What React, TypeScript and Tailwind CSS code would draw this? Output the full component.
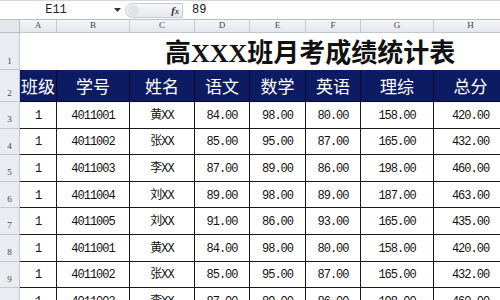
const rows: string[][] = [
  ['1', '4011001', '黄XX', '84.00', '98.00', '80.00', '158.00', '420.00'],
  ['1', '4011002', '张XX', '85.00', '95.00', '87.00', '165.00', '432.00'],
  ['1', '4011003', '李XX', '87.00', '89.00', '86.00', '198.00', '460.00'],
  ['1', '4011004', '刘XX', '89.00', '98.00', '89.00', '187.00', '463.00'],
  ['1', '4011005', '刘XX', '91.00', '86.00', '93.00', '165.00', '435.00'],
  ['1', '4011001', '黄XX', '84.00', '98.00', '80.00', '158.00', '420.00'],
  ['1', '4011002', '张XX', '85.00', '95.00', '87.00', '165.00', '432.00'],
  ['1', '4011003', '李XX', '87.00', '89.00', '86.00', '198.00', '460.00'],
];

const cols = ['A', 'B', 'C', 'D', 'E', 'F', 'G', 'H'];
const heads = ['班级', '学号', '姓名', '语文', '数学', '英语', '理综', '总分'];

const mono = { fontFamily: '"Liberation Mono", "Noto Sans CJK SC", monospace' };

function RowNum({ n, h }: { n: number; h: string }) {
  return (
    <div
      className={`${h} flex items-end justify-center bg-[#e9ecf0] border-b border-r border-[#c3c8cf] text-[9px] text-[#444] pb-[1px]`}
      style={{ fontFamily: '"Liberation Serif", serif' }}
    >
      {n}
    </div>
  );
}

export default function App() {
  return (
    <div className="w-[500px] h-[300px] overflow-hidden bg-white">
      {/* formula bar */}
      <div className="h-[20px] flex items-center border-b border-[#b9bec6] border-t border-t-[#d5d8dc] bg-white">
        <div className="w-[112px] text-center text-[12px] text-[#222]" style={mono}>
          E11
        </div>
        <div className="w-[10px] flex justify-center">
          <svg width="7" height="4" viewBox="0 0 7 4">
            <path d="M0 0h7L3.5 4z" fill="#333" />
          </svg>
        </div>
        <div className="ml-[3px] h-[15px] w-[58px] rounded-l-full border border-[#c6cad0] bg-gradient-to-b from-[#f6f7f9] to-[#e6e9ee] flex items-center justify-end pr-[3px] relative">
          <div className="absolute left-[2px] top-[1px] w-[11px] h-[11px] rounded-full bg-[#dfe3e8]" />
          <span className="text-[11px] italic font-bold text-[#333]" style={{ fontFamily: '"Liberation Serif", serif' }}>
            f<span className="text-[8px]">x</span>
          </span>
        </div>
        <div className="pl-[9px] text-[12px] text-[#111]" style={mono}>
          89
        </div>
      </div>

      <div className="grid grid-cols-[20px_37px_73px_65px_55px_56px_55px_73px_74px]">
        {/* column headers */}
        <div className="h-[13px] bg-[#e4e8ed] border-r border-b border-[#b9bec6]" />
        {cols.map((c) => (
          <div
            key={c}
            className="h-[13px] flex items-center justify-center bg-gradient-to-b from-[#f3f5f8] to-[#e3e7ec] border-r border-b border-[#c3c8cf] text-[9px] text-[#444]"
            style={{ fontFamily: '"Liberation Serif", serif' }}
          >
            {c}
          </div>
        ))}

        {/* title row */}
        <RowNum n={1} h="h-[37px]" />
        <div
          className="col-span-8 h-[37px] flex items-end pl-[145px] pb-[3px] text-[26px] font-semibold text-[#111] leading-none"
          style={{ fontFamily: '"Liberation Serif", "Noto Sans CJK SC", serif' }}
        >
          高XXX班月考成绩统计表
        </div>

        {/* header row */}
        <RowNum n={2} h="h-[32px]" />
        {heads.map((t) => (
          <div
            key={t}
            className="h-[32px] flex items-center justify-center bg-[#0d1b63] border-r border-b border-[#05082a] text-[17px] text-white"
            style={{ fontFamily: '"Noto Sans CJK SC", sans-serif' }}
          >
            {t}
          </div>
        ))}

        {/* body */}
        {rows.map((r, i) => (
          <div key={i} className="contents">
            <RowNum n={i + 3} h="h-[26.6px]" />
            {r.map((v, j) => (
              <div
                key={j}
                className="h-[26.6px] flex items-center justify-center pt-[2px] border-r border-b border-[#1a1a1a] text-[12px] text-[#111] tracking-[-1px]"
                style={mono}
              >
                {v}
              </div>
            ))}
          </div>
        ))}
      </div>
    </div>
  );
}
